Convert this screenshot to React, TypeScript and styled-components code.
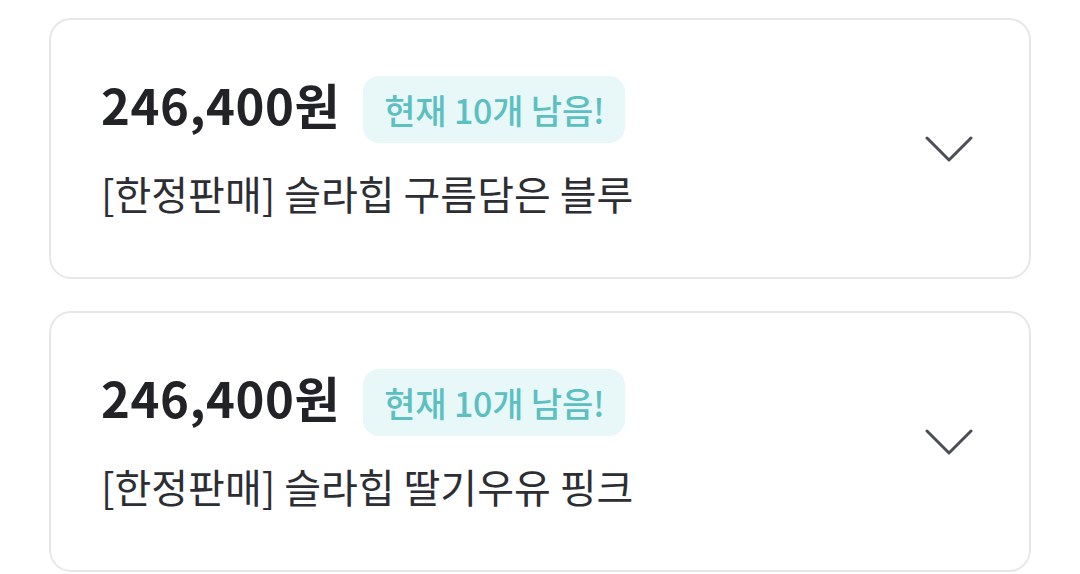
import React from 'react';
import styled, { createGlobalStyle } from 'styled-components';

const GlobalStyle = createGlobalStyle`
    html, body {
        margin: 0;
        padding: 0;
        background: #ffffff;
    }
    body {
        font-family: "Noto Sans CJK KR", "Noto Sans", sans-serif;
        -webkit-font-smoothing: antialiased;
    }
`;

const List = styled.div`
    display: flex;
    flex-direction: column;
    gap: 32px;
    padding: 18px 49px;
`;

const Card = styled.div`
    display: flex;
    align-items: center;
    justify-content: space-between;
    height: 261px;
    box-sizing: border-box;
    padding: 0 56px 0 50px;
    border: 2px solid #e7e7e9;
    border-radius: 22px;
    background: #fff;
`;

const Info = styled.div`
    display: flex;
    flex-direction: column;
    gap: 25px;
    margin-top: -3px;
`;

const PriceRow = styled.div`
    display: flex;
    align-items: center;
    gap: 23px;
`;

const Price = styled.span`
    font-size: 49px;
    font-weight: 700;
    color: #212327;
    letter-spacing: 0.6px;
    line-height: 1;
    margin-bottom: 12px;
`;

const Badge = styled.span`
    display: inline-flex;
    align-items: center;
    height: 67px;
    padding: 0 21px 0 21px;
    border-radius: 16px;
    background: #e8f7f8;
    color: #5cbfc2;
    font-size: 34px;
    font-weight: 500;
    letter-spacing: -0.2px;
`;

const Name = styled.div`
    font-size: 40px;
    font-weight: 400;
    color: #2c2e33;
    line-height: 50px;
`;

const Toggle = styled.button`
    display: flex;
    align-items: center;
    justify-content: center;
    padding: 0;
    border: none;
    background: none;
    cursor: pointer;
`;

const Chevron: React.FC = () => (
    <svg width="48" height="28" viewBox="0 0 48 28" fill="none">
        <path d="M2 3 L24 25 L46 3" stroke="#4b4f55" strokeWidth="3" strokeLinecap="round" strokeLinejoin="round" />
    </svg>
);

const options = [
    { price: '246,400원', stock: 10, name: '[한정판매] 슬라힙 구름담은 블루' },
    { price: '246,400원', stock: 10, name: '[한정판매] 슬라힙 딸기우유 핑크' },
];

const App: React.FC = () => {
    return (
        <>
            <GlobalStyle />
            <List>
                {options.map((opt) => (
                    <Card key={opt.name}>
                        <Info>
                            <PriceRow>
                                <Price>{opt.price}</Price>
                                <Badge>현재 {opt.stock}개 남음!</Badge>
                            </PriceRow>
                            <Name>{opt.name}</Name>
                        </Info>
                        <Toggle aria-label="펼치기">
                            <Chevron />
                        </Toggle>
                    </Card>
                ))}
            </List>
        </>
    );
};

export default App;
